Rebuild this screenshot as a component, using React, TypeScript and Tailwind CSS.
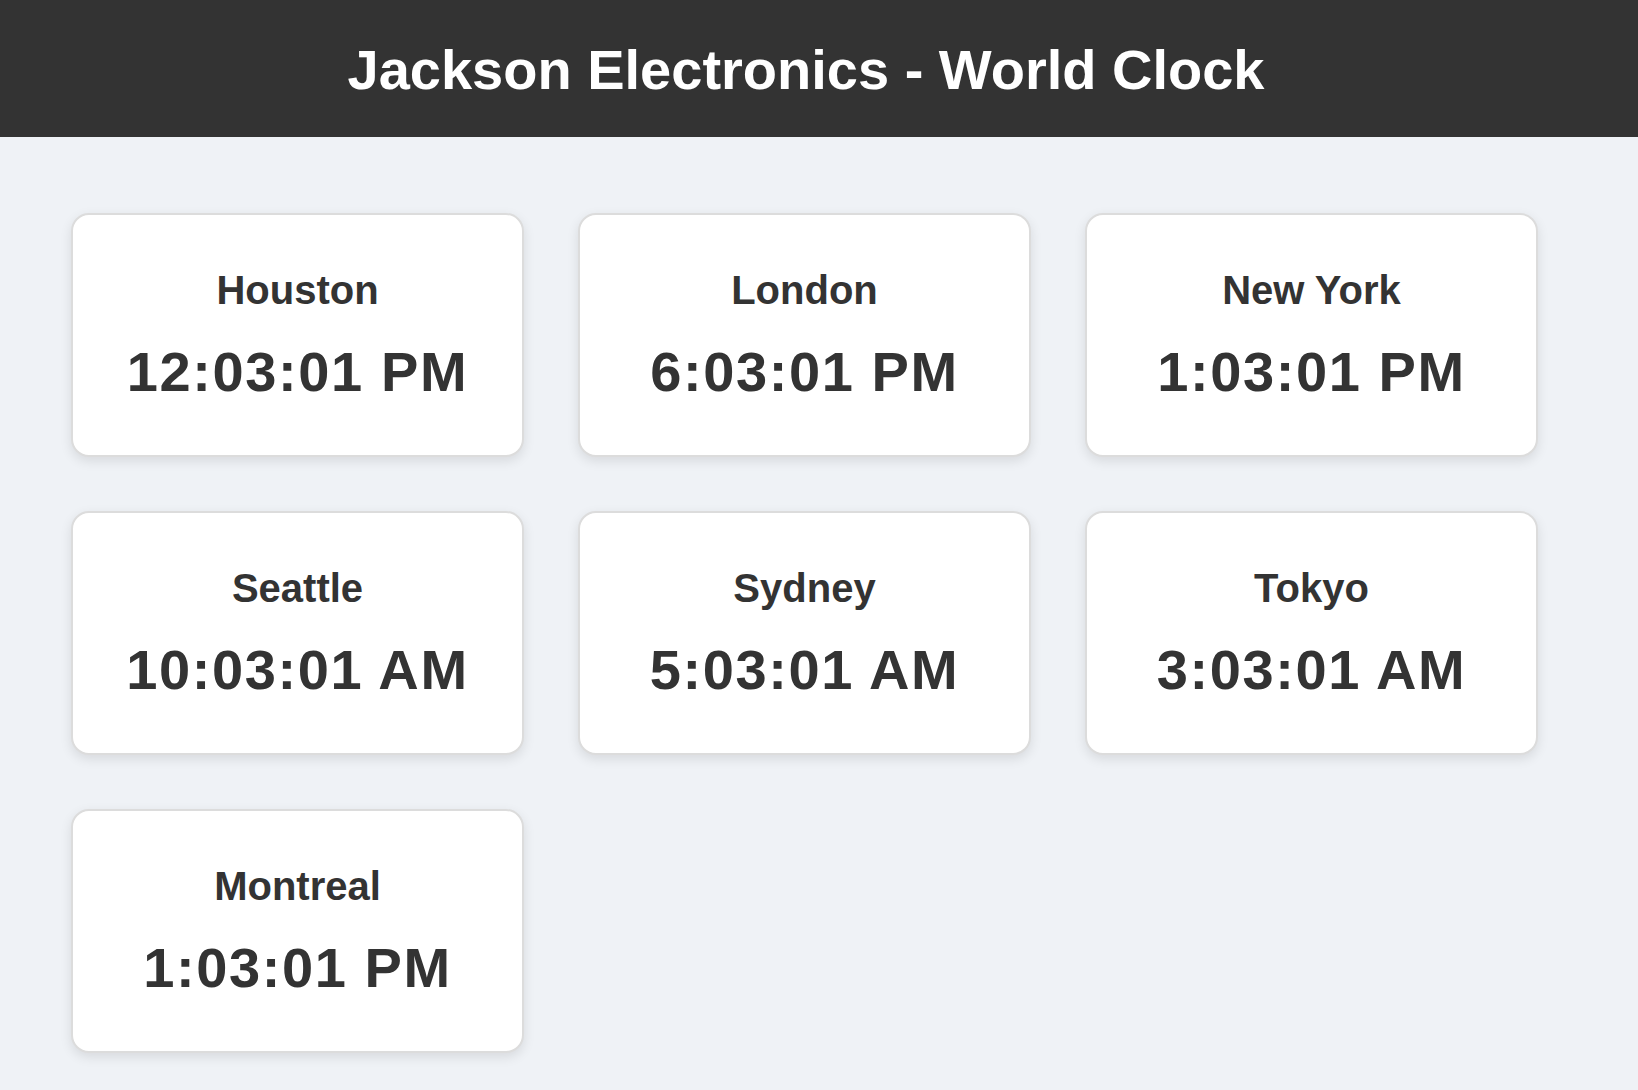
import React from "react";

const clocks = [
  { city: "Houston", time: "12:03:01 PM" },
  { city: "London", time: "6:03:01 PM" },
  { city: "New York", time: "1:03:01 PM" },
  { city: "Seattle", time: "10:03:01 AM" },
  { city: "Sydney", time: "5:03:01 AM" },
  { city: "Tokyo", time: "3:03:01 AM" },
  { city: "Montreal", time: "1:03:01 PM" },
];

function ClockCard({ city, time }: { city: string; time: string }) {
  return (
    <div className="h-[244px] bg-white border-2 border-[#dcdcdc] rounded-[18px] shadow-[0_4px_12px_rgba(0,0,0,0.1)] flex flex-col items-center justify-center gap-[27px] text-[#333]">
      <div className="text-[40px] leading-[46px] font-bold">{city}</div>
      <div className="text-[56px] leading-[64px] font-bold tracking-[1.6px]">{time}</div>
    </div>
  );
}

export default function App() {
  return (
    <div
      className="min-h-screen bg-[#eff2f6]"
      style={{ fontFamily: '"Liberation Sans", Arial, sans-serif' }}
    >
      <header className="h-[137px] bg-[#333333] text-white">
        <div className="w-[1612px] h-full flex items-center justify-center pt-[3px]">
          <h1 className="text-[56px] leading-[64px] font-bold">
            Jackson Electronics - World Clock
          </h1>
        </div>
      </header>
      <main className="pl-[71px] pt-[76px] pb-[40px]">
        <div className="grid grid-cols-[repeat(3,453px)] gap-x-[54px] gap-y-[54px]">
          {clocks.map((c) => (
            <ClockCard key={c.city} city={c.city} time={c.time} />
          ))}
        </div>
      </main>
    </div>
  );
}
